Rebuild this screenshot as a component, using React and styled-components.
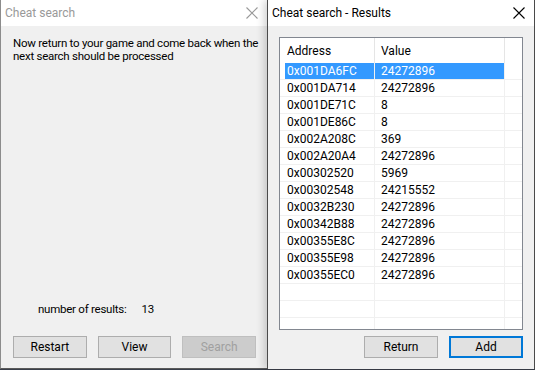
import React from 'react'
import styled, { createGlobalStyle } from 'styled-components'

const GlobalStyle = createGlobalStyle`
    html, body {
        margin: 0;
        padding: 0;
        background: #f0f0f0;
    }
    body {
        font-family: "Segoe UI", Roboto, "Noto Sans", sans-serif;
        font-size: 12px;
        color: #000;
    }
`

const rows = [
    ['0x001DA6FC', '24272896'],
    ['0x001DA714', '24272896'],
    ['0x001DE71C', '8'],
    ['0x001DE86C', '8'],
    ['0x002A208C', '369'],
    ['0x002A20A4', '24272896'],
    ['0x00302520', '5969'],
    ['0x00302548', '24215552'],
    ['0x0032B230', '24272896'],
    ['0x00342B88', '24272896'],
    ['0x00355E8C', '24272896'],
    ['0x00355E98', '24272896'],
    ['0x00355EC0', '24272896'],
]

function CloseIcon({ color }) {
    return (
        <svg width="12" height="12" viewBox="0 0 12 12">
            <path d="M0.5 0.5 L11.5 11.5 M11.5 0.5 L0.5 11.5" stroke={color} strokeWidth="1.1" fill="none" />
        </svg>
    )
}

function App() {
    return (
        <Desktop>
            <GlobalStyle />
            <SearchWindow>
                <TitleBar>
                    <Title $inactive>Cheat search</Title>
                    <CloseBox><CloseIcon color="#999" /></CloseBox>
                </TitleBar>
                <SearchBody>
                    <Message>
                        Now return to your game and come back when the<br />
                        next search should be processed
                    </Message>
                    <CountRow>
                        <span>number of results:</span>
                        <span>13</span>
                    </CountRow>
                    <ButtonRow>
                        <Button>Restart</Button>
                        <Button>View</Button>
                        <Button disabled>Search</Button>
                    </ButtonRow>
                </SearchBody>
            </SearchWindow>
            <ResultsWindow>
                <TitleBar>
                    <Title>Cheat search - Results</Title>
                    <CloseBox><CloseIcon color="#000" /></CloseBox>
                </TitleBar>
                <ResultsBody>
                    <ListView>
                        <HeaderRow>
                            <HeadCell $w={90}>Address</HeadCell>
                            <HeadCell $w={130} $pad={6}>Value</HeadCell>
                            <HeadCell $fill />
                        </HeaderRow>
                        {rows.map(([addr, val], i) => (
                            <Row key={addr}>
                                <Cell $w={90} $selected={i === 0}>{addr}</Cell>
                                <Cell $w={130} $pad={6} $selected={i === 0}>{val}</Cell>
                                <Cell $fill />
                            </Row>
                        ))}
                        {[0, 1, 2].map((i) => (
                            <Row key={'e' + i}>
                                <Cell $w={90} />
                                <Cell $w={130} $pad={6} />
                                <Cell $fill />
                            </Row>
                        ))}
                    </ListView>
                    <ButtonRow $right>
                        <Button>Return</Button>
                        <Button $default>Add</Button>
                    </ButtonRow>
                </ResultsBody>
            </ResultsWindow>
        </Desktop>
    )
}

export default App;

const Desktop = styled.div`
    width: 535px;
    height: 370px;
    display: flex;
    overflow: hidden;
    background: #3a3f4a;
`
const SearchWindow = styled.div`
    width: 266px;
    height: 368px;
    flex-shrink: 0;
    display: flex;
    flex-direction: column;
    background: #f0f0f0;
    border-left: 1px solid #8c8c8c;
    border-bottom: 1px solid #5a5a5a;
`
const ResultsWindow = styled.div`
    width: 266px;
    height: 369px;
    flex-shrink: 0;
    display: flex;
    flex-direction: column;
    background: #f0f0f0;
    border-left: 1px solid #4a4a4a;
    border-right: 1px solid #4a4a4a;
    box-shadow: -3px 0 8px rgba(0, 0, 0, 0.18);
    position: relative;
`
const TitleBar = styled.div`
    height: 26px;
    flex-shrink: 0;
    background: #fff;
    display: flex;
    align-items: center;
    justify-content: space-between;
    padding: 0 9px 0 4px;
`
const Title = styled.div`
    font-size: 12px;
    color: ${(p) => (p.$inactive ? '#999' : '#000')};
    white-space: nowrap;
`
const CloseBox = styled.div`
    display: flex;
    align-items: center;
`
const SearchBody = styled.div`
    flex: 1;
    display: flex;
    flex-direction: column;
    padding: 11px 11px 10px 12px;
`
const Message = styled.div`
    font-size: 11.5px;
    letter-spacing: -0.25px;
    line-height: 13px;
    white-space: nowrap;
    flex: 1;
`
const CountRow = styled.div`
    display: flex;
    gap: 15px;
    padding-left: 25px;
    margin-bottom: 20px;
    font-size: 11.5px;
    letter-spacing: -0.25px;
`
const ButtonRow = styled.div`
    display: flex;
    gap: 11px;
    justify-content: ${(p) => (p.$right ? 'flex-end' : 'flex-start')};
    padding-right: ${(p) => (p.$right ? '11px' : '0')};
`
const Button = styled.button`
    width: 74px;
    height: 22px;
    box-sizing: border-box;
    font-family: inherit;
    font-size: 12px;
    color: #000;
    background: #e1e1e1;
    border: ${(p) => (p.$default ? '2px solid #0078d7' : '1px solid #adadad')};
    padding: 0;
    &:disabled {
        background: #cccccc;
        border-color: #bfbfbf;
        color: #a0a0a0;
    }
`
const ResultsBody = styled.div`
    flex: 1;
    display: flex;
    flex-direction: column;
    gap: 6px;
    padding-top: 11px;
`
const ListView = styled.div`
    margin-left: 11px;
    width: 244px;
    height: 293px;
    box-sizing: border-box;
    border: 1px solid #828790;
    background: #fff;
    overflow: hidden;
`
const HeaderRow = styled.div`
    display: flex;
    height: 25px;
    padding-left: 5px;
`
const HeadCell = styled.div`
    width: ${(p) => (p.$fill ? 'auto' : p.$w + 'px')};
    flex: ${(p) => (p.$fill ? 1 : 'none')};
    box-sizing: border-box;
    padding-left: ${(p) => (p.$pad ?? 2)}px;
    display: flex;
    align-items: center;
    border-right: 1px solid ${(p) => (p.$fill ? 'transparent' : '#e5e5e5')};
`
const Row = styled.div`
    display: flex;
    height: 17px;
    box-sizing: border-box;
    padding-left: 5px;
    border-bottom: 1px solid #f0f0f0;
`
const Cell = styled.div`
    width: ${(p) => (p.$fill ? 'auto' : p.$w + 'px')};
    flex: ${(p) => (p.$fill ? 1 : 'none')};
    box-sizing: border-box;
    padding-left: ${(p) => (p.$pad ?? 2)}px;
    display: flex;
    align-items: center;
    white-space: nowrap;
    background: ${(p) => (p.$selected ? '#3399ff' : 'transparent')};
    color: ${(p) => (p.$selected ? '#fff' : '#000')};
    border-right: 1px solid ${(p) => (p.$fill ? 'transparent' : '#f0f0f0')};
`
